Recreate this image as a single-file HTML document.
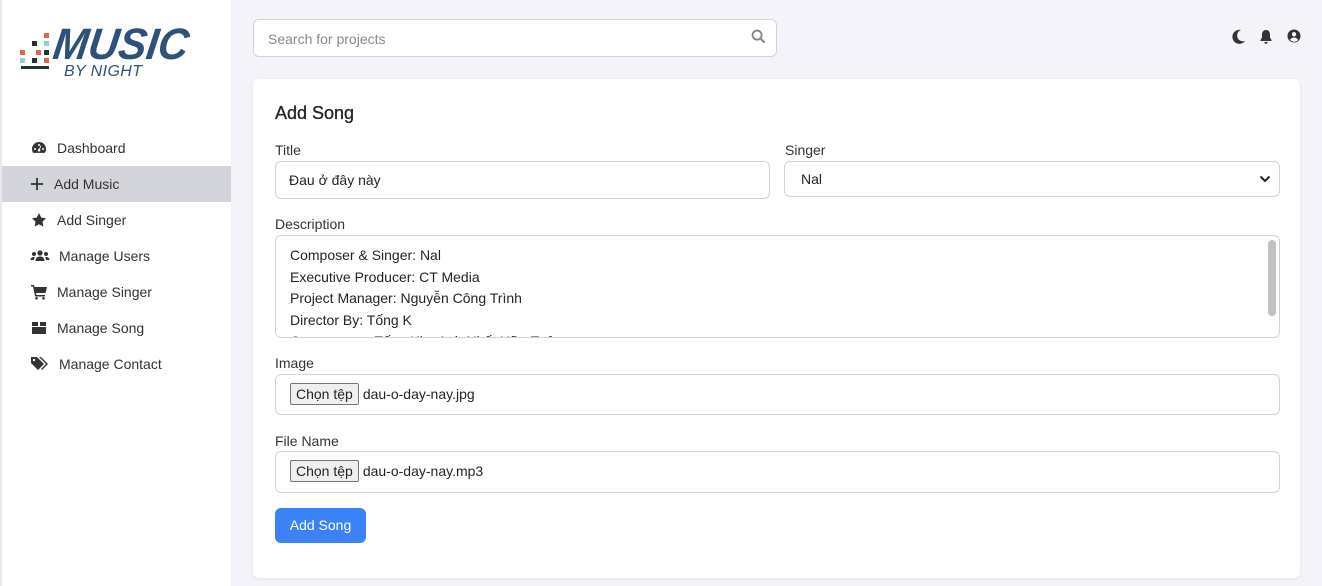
<!DOCTYPE html>
<html><head><meta charset="utf-8"><style>
*{box-sizing:border-box;margin:0;padding:0}
body{width:1322px;height:586px;overflow:hidden;background:#f3f3f9;font-family:"Liberation Sans","Noto Sans CJK SC",sans-serif;color:#212529;position:relative}
.side{position:absolute;left:0;top:0;width:231px;height:586px;background:#fff;border-left:2px solid #e8e8ee}
.logo{position:absolute;left:16px;top:14px}
.nav{position:absolute;top:130px;left:0;width:229px}
.nav div{height:36px;display:flex;align-items:center;padding-left:28px;font-size:14px;color:#333}
.nav div.act{background:#d3d5db}
.nav svg{width:18px;height:16px;margin-right:9px;fill:#333}
.search{position:absolute;left:253px;top:19px;width:524px;height:38px;background:#fff;border:1px solid #ced4da;border-radius:6px;font-size:14px;color:#888;padding:11px 14px}
.card{position:absolute;left:253px;top:79px;width:1047px;height:499px;background:#fff;border-radius:6px;box-shadow:0 1px 3px rgba(0,0,0,.08)}
h2{position:absolute;left:22px;top:24px;font-size:18px;font-weight:normal;color:#222;-webkit-text-stroke:.3px #222}
.lbl{position:absolute;font-size:14px;color:#333}
.in{position:absolute;background:#fff;border:1px solid #ced4da;border-radius:6px;font-size:14px;color:#212529}
.btnf{display:inline-block;border:1px solid #767676;background:#efefef;border-radius:2px;padding:2px 5px;font-size:14px;margin-right:4px}
.btn{position:absolute;left:22px;top:429px;width:91px;height:35px;background:#3b82f6;border-radius:6px;color:#fff;font-size:14px;text-align:center;line-height:35px}
</style></head><body>
<div class="side">
<div class="logo"><svg width="175" height="65" viewBox="0 0 175 65">
<g fill="#e0664a"><rect x="26" y="19" width="5" height="5"/><rect x="2" y="36" width="5" height="5"/><rect x="18" y="36" width="5" height="5"/><rect x="26" y="44" width="5" height="5"/></g>
<g fill="#9ac9d6"><rect x="26" y="27" width="5" height="5"/><rect x="2" y="44" width="5" height="5"/></g>
<g fill="#233"><rect x="14" y="27" width="5" height="5"/><rect x="14" y="44" width="5" height="5"/><rect x="26" y="36" width="5" height="5"/><rect x="3" y="52" width="28" height="3"/></g>
<text x="40" y="45" font-family="Liberation Sans" font-weight="bold" font-style="italic" font-size="44" fill="#2f5178" transform="skewX(-8)" textLength="135" lengthAdjust="spacingAndGlyphs">MUSIC</text>
<text x="46" y="62" font-family="Liberation Sans" font-style="italic" font-size="16" fill="#2f5178" textLength="78">BY NIGHT</text>
</svg></div>
<div class="nav">
<div><svg viewBox="0 0 16 16"><path d="M8 2a7 7 0 0 0-7 7c0 1.5.5 2.8 1.2 3.9h11.6A7 7 0 0 0 8 2zm0 2a1 1 0 1 1 0 2 1 1 0 0 1 0-2zM4 8a1 1 0 1 1 0 2 1 1 0 0 1 0-2zm8 0a1 1 0 1 1 0 2 1 1 0 0 1 0-2zM9.5 5.5l.8.4-1.4 3.4a1.3 1.3 0 1 1-.8-.3z"/></svg>Dashboard</div>
<div class="act"><svg viewBox="0 0 16 16" style="width:14px;margin-right:10px"><path d="M7 1h2v6h6v2H9v6H7V9H1V7h6z"/></svg>Add Music</div>
<div><svg viewBox="0 0 16 16"><path d="M8 1l2.2 4.5 4.8.7-3.5 3.4.8 4.9L8 12.2l-4.3 2.3.8-4.9L1 6.2l4.8-.7z"/></svg>Add Singer</div>
<div><svg viewBox="0 0 20 16" style="width:20px"><circle cx="10" cy="5" r="2.6"/><circle cx="4" cy="6" r="2"/><circle cx="16" cy="6" r="2"/><path d="M5.5 13c0-3 2-4.5 4.5-4.5s4.5 1.5 4.5 4.5zM0.5 12c0-2 1.3-3 3.2-3 .6 0 1 .1 1.3.3-.6.7-.9 1.6-1 2.7zM19.5 12c0-2-1.3-3-3.2-3-.6 0-1 .1-1.3.3.6.7.9 1.6 1 2.7z"/></svg>Manage Users</div>
<div><svg viewBox="0 0 16 16"><path d="M0 1h3l.5 2H16l-1.5 6H5l.4 2H14v1.5H4.2L2 2.5H0z"/><circle cx="5.5" cy="14.3" r="1.3"/><circle cx="12.5" cy="14.3" r="1.3"/></svg>Manage Singer</div>
<div><svg viewBox="0 0 16 16"><path d="M1 2h6v4H1zM9 2h6v4H9zM1 7h14v7H1z"/></svg>Manage Song</div>
<div><svg viewBox="0 0 20 16" style="width:20px"><path d="M1 1h6l7 7-6 6-7-7zM9 1h2l7 7-6 6-1-1 5-5z"/><circle cx="4" cy="4" r="1.2" fill="#fff"/></svg>Manage Contact</div>
</div>
</div>
<div class="search">Search for projects<svg style="position:absolute;right:10px;top:9px" width="15" height="15" viewBox="0 0 16 16"><circle cx="6.5" cy="6.5" r="4.8" fill="none" stroke="#888" stroke-width="2"/><path d="M10 10l4.5 4.5" stroke="#888" stroke-width="2.2"/></svg></div>
<svg style="position:absolute;left:1232px;top:29px" width="14" height="15" viewBox="0 0 14 15"><path d="M9 1A7 7 0 1 0 13 12 5.5 5.5 0 0 1 9 1z" fill="#333"/></svg>
<svg style="position:absolute;left:1259px;top:29px" width="14" height="16" viewBox="0 0 14 16"><path d="M7 1c-2.6 0-4 2-4 4.5v3L1.5 11v1h11v-1L11 8.5v-3C11 3 9.6 1 7 1zM5.3 13h3.4a1.7 1.7 0 0 1-3.4 0z" fill="#333"/></svg>
<svg style="position:absolute;left:1287px;top:29px" width="14" height="14" viewBox="0 0 14 14"><circle cx="7" cy="7" r="6.5" fill="#333"/><circle cx="7" cy="5.3" r="2.2" fill="#fff"/><path d="M3 10.8c1-1.6 2.4-2.2 4-2.2s3 .6 4 2.2A5 5 0 0 1 3 10.8z" fill="#fff"/></svg>
<div class="card">
<h2>Add Song</h2>
<div class="lbl" style="left:22px;top:63px">Title</div>
<div class="in" style="left:22px;top:82px;width:495px;height:38px;padding:10px 13px">Đau ở đây này</div>
<div class="lbl" style="left:532px;top:63px">Singer</div>
<div class="in" style="left:531px;top:82px;width:496px;height:36px;padding:9px 16px">Nal<svg style="position:absolute;right:8px;top:12px" width="12" height="10" viewBox="0 0 12 10"><path d="M1.5 2.5L6 7l4.5-4.5" fill="none" stroke="#222" stroke-width="2"/></svg></div>
<div class="lbl" style="left:22px;top:137px">Description</div>
<div class="in" style="left:22px;top:156px;width:1005px;height:103px;padding:9px 14px;line-height:21.6px;overflow:hidden">Composer &amp; Singer: Nal<br>Executive Producer: CT Media<br>Project Manager: Nguyễn Công Trình<br>Director By: Tống K<br>Cameraman: Tống Kim Anh Nhất Hữu Tuệ
<div style="position:absolute;right:3px;top:4px;width:8px;height:76px;background:#c1c1c1;border-radius:4px"></div></div>
<div class="lbl" style="left:22px;top:276px">Image</div>
<div class="in" style="left:22px;top:295px;width:1005px;height:41px;padding:8px 14px">
<span class="btnf">Chọn tệp</span>dau-o-day-nay.jpg</div>
<div class="lbl" style="left:22px;top:354px">File Name</div>
<div class="in" style="left:22px;top:372px;width:1005px;height:42px;padding:8px 14px">
<span class="btnf">Chọn tệp</span>dau-o-day-nay.mp3</div>
<div class="btn">Add Song</div>
</div>
</body></html>
